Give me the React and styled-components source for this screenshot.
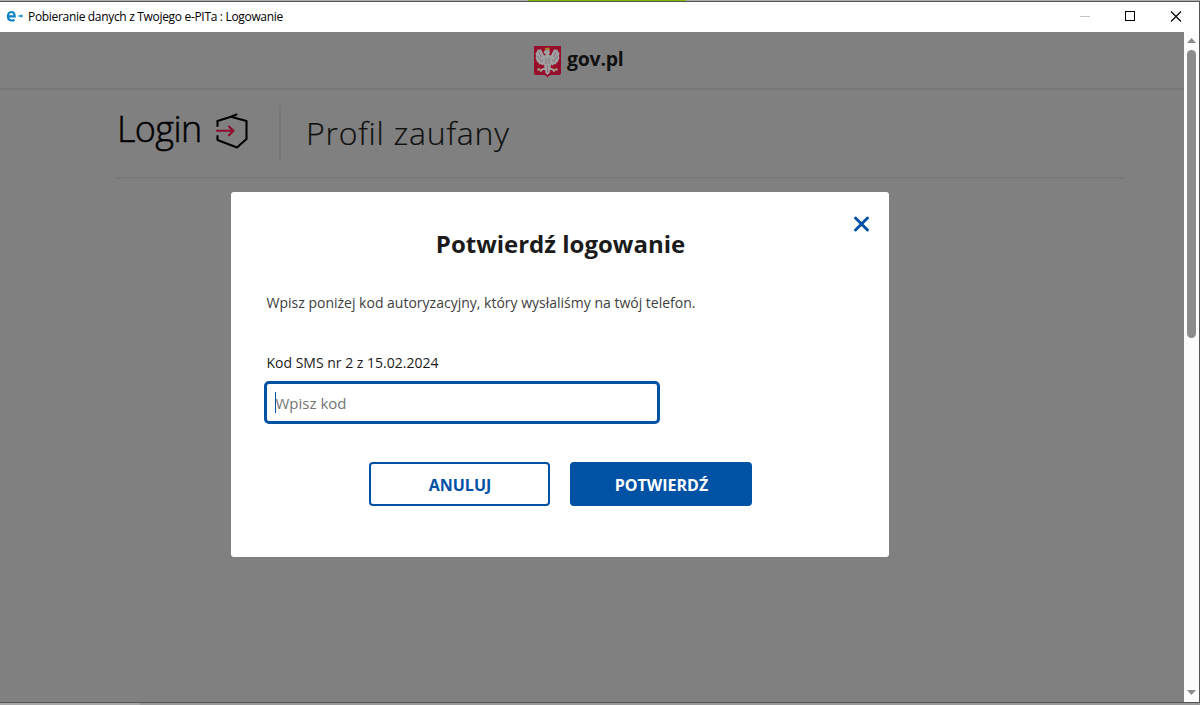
import React from "react";
import styled, { createGlobalStyle } from "styled-components";

const GlobalStyle = createGlobalStyle`
  * { box-sizing: border-box; }
  body { margin: 0; overflow: hidden; background: #a0a0a0; font-family: "Open Sans", "Noto Sans", sans-serif; }
`;

const Desktop = styled.div`
  width: 1200px;
  height: 705px;
  display: flex;
  flex-direction: column;
  background: linear-gradient(90deg, #a6a6a6 0 140px, #999 140px);
`;
const DesktopStrip = styled.div`
  height: 1px;
  background: linear-gradient(90deg, #adadad 0 528px, #7fba00 528px 686px, #adadad 686px);
`;
const Window = styled.div`
  height: 702px;
  display: flex;
  flex-direction: column;
  border: 1px solid #555;
  border-left: 0;
  background: #808080;
`;
const TitleBar = styled.header`
  height: 30px;
  flex: none;
  display: flex;
  align-items: center;
  padding-left: 6px;
  background: #fff;
`;
const Title = styled.span`
  margin-left: 4px;
  flex: 1;
  font: 12px/16px "Open Sans", sans-serif;
  letter-spacing: ${(p) => p.$tracking}px;
  color: #000;
  white-space: nowrap;
`;
const WindowButton = styled.button`
  width: 46px;
  height: 28px;
  padding: 0;
  border: 0;
  background: none;
  display: flex;
  align-items: center;
  justify-content: center;
`;
const Viewport = styled.div`
  flex: 1;
  min-height: 0;
  display: flex;
`;
const Page = styled.div`
  position: relative;
  width: 1184px;
`;
const GovBar = styled.div`
  height: 58px;
  display: flex;
  align-items: flex-start;
  padding: 13px 0 0 533px;
  border-bottom: 2px solid #787878;
`;
const GovName = styled.span`
  margin: 0 0 0 5px;
  font-size: 19.5px;
  line-height: 28px;
  font-weight: 700;
  letter-spacing: -0.25px;
  color: #101010;
`;
const LoginHeader = styled.div`
  height: 89px;
  margin: 0 60px 0 115px;
  padding: 15px 0 0 3px;
  display: flex;
  border-bottom: 2px solid #787878;
`;
const Brand = styled.div`
  width: 163px;
  height: 56px;
  display: flex;
  border-right: 2px solid #787878;
`;
const BrandText = styled.span`
  width: 96px;
  margin-left: -1px;
  margin-right: 1px;
  font-family: "Open Sans", sans-serif;
  font-size: 36px;
  line-height: 48px;
  font-weight: 350;
  letter-spacing: -0.6px;
  -webkit-text-stroke: 0.5px #000;
  color: #000;
`;
const ProfileTitle = styled.h1`
  margin: 0 0 0 25px;
  font-size: 32px;
  line-height: 56px;
  font-weight: 340;
  letter-spacing: 0.75px;
  -webkit-text-stroke: 0.2px #101010;
  color: #101010;
`;
const Dialog = styled.section`
  position: absolute;
  left: 231px;
  top: 159.5px;
  width: 658px;
  height: 365px;
  padding: 20px 35px 0 36px;
  border-radius: 3px;
  background: #fff;
  display: flex;
  flex-direction: column;
`;
const CloseRow = styled.div`
  height: 14px;
  display: flex;
  justify-content: flex-end;
  margin-right: -18px;
`;
const CloseButton = styled.button`
  width: 20px;
  height: 24px;
  padding: 0;
  border: 0;
  background: none;
`;
const DialogTitle = styled.h2`
  margin: 0;
  font-size: 24px;
  line-height: 36px;
  font-weight: 700;
  text-align: center;
  color: #1b1b1b;
`;
const Message = styled.p`
  margin: 30px 0 0 -0.5px;
  font-size: 14px;
  line-height: 22px;
  color: #404040;
`;
const Label = styled.label`
  margin: 38px 0 0 -0.5px;
  font-size: 14px;
  line-height: 22px;
  color: #1b1b1b;
`;
const CodeField = styled.div`
  width: 396px;
  height: 43px;
  margin: 7.5px 0 0 -3px;
  padding-left: 8px;
  display: flex;
  align-items: center;
  border: 3px solid #0052a5;
  border-radius: 5px;
  font-size: 15px;
  color: #757575;
`;
const Caret = styled.span`
  width: 1px;
  height: 21px;
  margin-right: -0.5px;
  background: #0052a5;
`;
const Actions = styled.div`
  display: flex;
  justify-content: center;
  gap: 20px;
  margin-top: 38px;
`;
const ActionButton = styled.button`
  width: ${(p) => (p.$primary ? 182 : 181)}px;
  height: 44px;
  padding: 1px 0 0 1px;
  border: 2px solid #0052a5;
  border-radius: 4px;
  background: ${(p) => (p.$primary ? "#0052a5" : "#fff")};
  color: ${(p) => (p.$primary ? "#fff" : "#0052a5")};
  font: 700 16px/22px "Open Sans", sans-serif;
`;
const ScrollBar = styled.div`
  width: 15px;
  background: #fcfcfc;
  display: flex;
  flex-direction: column;
  align-items: center;
  padding: 6px 0 7px;
`;
const Thumb = styled.div`
  width: 9px;
  height: 288px;
  margin: 7px 0 auto;
  border-radius: 5px;
  background: #8b8b8b;
`;

const AppIcon = () => (
  <svg width="18" height="14" viewBox="0 0 18 14">
    <path d="M2.200 6.300H8.700C8.600 3.500 7.500 2 5.400 2C3.200 2 2 3.600 2 6.300C2 9 3.300 10.500 5.600 10.500C6.800 10.500 7.700 10.300 8.500 9.800" fill="none" stroke="#0b83c5" strokeWidth="2.200" />
    <path d="M12 6H16.500" stroke="#7cc9ea" strokeWidth="2" />
    <path d="M14 6H16.500" stroke="#1497d0" strokeWidth="2.400" />
  </svg>
);

const Eagle = () => (
  <svg width="29" height="33" viewBox="0 0 29 33">
    <path d="M1 1H28V28Q28 30 25 30H18Q15.500 30 14.500 32.500Q13.500 30 11 30H4Q1 30 1 28Z" fill="#960c2a" />
    <path fill="#a0a0a0" d="M13 5L16 4.500L17 7L16 10L18 10.500L19.500 7L21.500 4L23 5L24.500 4.500L25 6.500L26.500 8L26 11L26.500 13L25.500 15L25 17L23.500 17.500L23 19.500L21 19L20 20.500L18 19.500L17.500 22.500L21 24L24 23L25 25.500L22.500 25.500L21 27.500L19 25L17 25L16.500 28L14.500 30L12.500 28L12 25L10 25L8 27.500L6.500 25.500L4 25.500L5 23L8 24L11.500 22.500L11 19.500L9 20.500L8 19L6 19.500L5.500 17.500L4 17L3.500 15L2.500 13L3 11L2.500 8L4 6.500L4.500 4.500L6 5L7.500 4L9.500 7L11 10.500L13 10L11 8L11 6Z" />
    <path d="M12 5L12 2.500L13.500 3.500L15 2L16 3.500L17 3L16.500 5Z" fill="#a78430" />
    <path d="M6 7L8 12M4 11L8 15M7 17L10 15M23 7L21 12M25 11L21 15M22 17L19 15M13 13V19M16 13V19M14.500 20V27" stroke="#7d6571" strokeWidth=".8" fill="none" />
    <path d="M6 24L8 25M23 24L21 25" stroke="#a78430" strokeWidth="1.300" />
  </svg>
);

const LoginMark = styled(({ className }) => (
  <svg className={className} width="36" height="40" viewBox="0 0 36 40" fill="none">
    <path d="M3.500 14V9L17 4.800L32.500 9V27L23 35.500L3.500 28V24M17 4.800L22.500 2.500" stroke="#000" strokeWidth="2.100" strokeLinecap="round" strokeLinejoin="round" />
    <path d="M3 18.800H19.500M15 14.500L19.500 18.800L15 23.200" stroke="#8f0b2c" strokeWidth="2.100" strokeLinecap="round" strokeLinejoin="round" />
  </svg>
))`
  flex: none;
  margin-top: 7px;
`;

export default function App() {
  return (
    <>
      <GlobalStyle />
      <Desktop>
        <DesktopStrip />
        <Window>
          <TitleBar>
            <AppIcon />
            <Title $tracking={-0.32}>Pobieranie danych z Twojego e-PITa : Logowanie</Title>
            <WindowButton aria-label="Minimalizuj">
              <svg width="12" height="12"><path d="M2 5.500H12" stroke="#c4c4c4" /></svg>
            </WindowButton>
            <WindowButton aria-label="Maksymalizuj">
              <svg width="12" height="12"><rect x="1.500" y=".5" width="9" height="9" fill="none" stroke="#000" /></svg>
            </WindowButton>
            <WindowButton aria-label="Zamknij okno">
              <svg width="12" height="12"><path d="M1 .5L11 10.500M11 .5L1 10.500" stroke="#000" strokeWidth="1.100" /></svg>
            </WindowButton>
          </TitleBar>
          <Viewport>
            <Page>
              <GovBar>
                <Eagle />
                <GovName>gov.pl</GovName>
              </GovBar>
              <LoginHeader>
                <Brand>
                  <BrandText>Login</BrandText>
                  <LoginMark />
                </Brand>
                <ProfileTitle>Profil zaufany</ProfileTitle>
              </LoginHeader>
              <Dialog role="dialog">
                <CloseRow>
                  <CloseButton aria-label="Zamknij">
                    <svg width="20" height="24" viewBox="0 0 20 24"><path d="M3.500 6L15.500 18M15.500 6L3.500 18" stroke="#0052a5" strokeWidth="3" strokeLinecap="round" /></svg>
                  </CloseButton>
                </CloseRow>
                <DialogTitle>Potwierdź logowanie</DialogTitle>
                <Message>Wpisz poniżej kod autoryzacyjny, który wysłaliśmy na twój telefon.</Message>
                <Label>Kod SMS nr 2 z 15.02.2024</Label>
                <CodeField><Caret />Wpisz kod</CodeField>
                <Actions>
                  <ActionButton>ANULUJ</ActionButton>
                  <ActionButton $primary>POTWIERDŹ</ActionButton>
                </Actions>
              </Dialog>
            </Page>
            <ScrollBar>
              <svg width="9" height="5"><path d="M0 5L4.500 0L9 5Z" fill="#8b8b8b" /></svg>
              <Thumb />
              <svg width="9" height="5"><path d="M0 0L4.500 5L9 0Z" fill="#8b8b8b" /></svg>
            </ScrollBar>
          </Viewport>
        </Window>
      </Desktop>
    </>
  );
}
